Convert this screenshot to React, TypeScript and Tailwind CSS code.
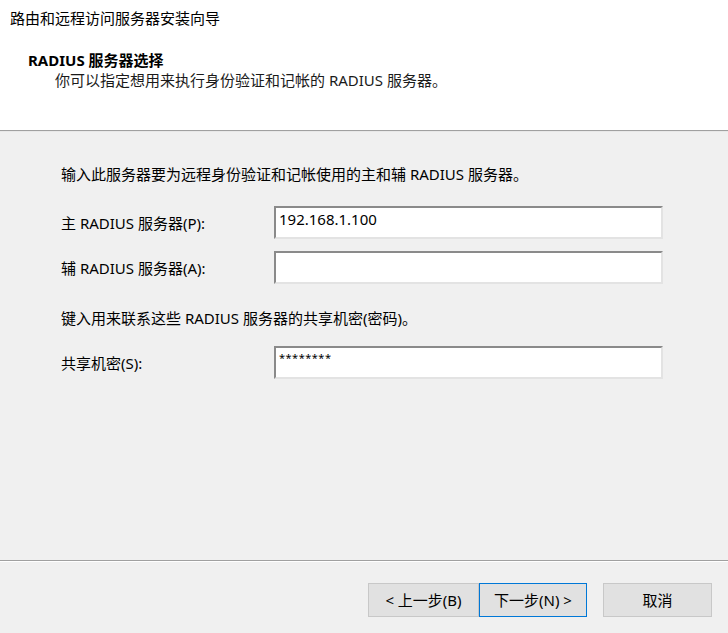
import React from "react";

const font = { fontFamily: '"Noto Sans", "Noto Sans CJK SC", sans-serif' };

function Field({ label, value, small }: { label: string; value: string; small?: boolean }) {
  return (
    <div className="flex items-center h-[33px]">
      <div className="w-[213px] text-[15px] leading-[20px] text-black">{label}</div>
      <div className="w-[389px] h-[33px] bg-white border-2 border-t-[#8a8a8a] border-l-[#8a8a8a] border-r-[#e3e3e3] border-b-[#e3e3e3] pl-[3px] pt-[1px]">
        <span className={small ? "block text-[11px] leading-[14px] text-black tracking-[0.5px] pt-[2px]" : "block text-[15px] leading-[20px] text-black"}>
          {value}
        </span>
      </div>
    </div>
  );
}

export default function App() {
  return (
    <div className="w-[728px] h-[633px] bg-[#f0f0f0] flex flex-col" style={font}>
      <div className="h-[130px] bg-white flex flex-col">
        <div className="pl-[10px] pt-[8px] text-[15px] leading-[20px] text-black">路由和远程访问服务器安装向导</div>
        <div className="pl-[28px] pt-[22px] text-[15px] leading-[20px] font-bold text-black">RADIUS 服务器选择</div>
        <div className="pl-[55px] text-[15px] leading-[20px] text-[#1a1a1a]">你可以指定想用来执行身份验证和记帐的 RADIUS 服务器。</div>
      </div>
      <div className="h-[1px] bg-[#a0a0a0]" />
      <div className="h-[1px] bg-[#e8e8e8]" />
      <div className="flex-1 flex flex-col pl-[61px] pt-[32px]">
        <div className="text-[15px] leading-[20px] text-black">输入此服务器要为远程身份验证和记帐使用的主和辅 RADIUS 服务器。</div>
        <div className="mt-[22px]">
          <Field label="主 RADIUS 服务器(P):" value="192.168.1.100" />
        </div>
        <div className="mt-[12px]">
          <Field label="辅 RADIUS 服务器(A):" value="" />
        </div>
        <div className="mt-[24px] text-[15px] leading-[20px] text-black">键入用来联系这些 RADIUS 服务器的共享机密(密码)。</div>
        <div className="mt-[18px]">
          <Field label="共享机密(S):" value="********" small />
        </div>
      </div>
      <div className="h-[1px] bg-[#a0a0a0]" />
      <div className="h-[1px] bg-white" />
      <div className="h-[71px] flex items-start pt-[21px] pl-[368px]">
        <button className="w-[111px] h-[34px] bg-[#e1e1e1] border border-[#c8c8c8] text-[15px] text-black flex items-center justify-center">&lt; 上一步(B)</button>
        <button className="w-[108px] h-[34px] bg-[#e1e1e1] border border-[#0078d7] text-[15px] text-black flex items-center justify-center">下一步(N) &gt;</button>
        <button className="ml-[16px] w-[109px] h-[34px] bg-[#e1e1e1] border border-[#c8c8c8] text-[15px] text-black flex items-center justify-center">取消</button>
      </div>
    </div>
  );
}
